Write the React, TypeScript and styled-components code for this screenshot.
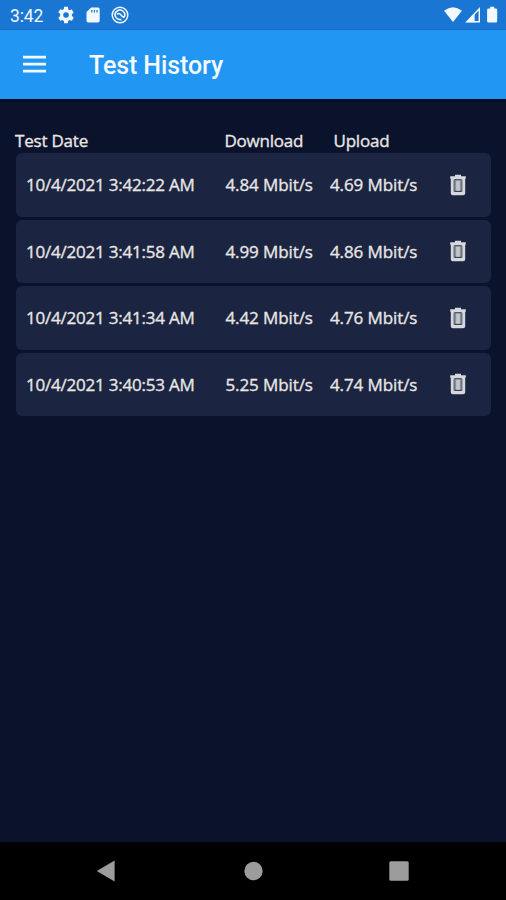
import React from "react";
import styled, { createGlobalStyle } from "styled-components";

const GlobalStyle = createGlobalStyle`
  * { box-sizing: border-box; }
  body { margin: 0; background: #0a122c; }
`;

const Screen = styled.div`
  display: flex;
  flex-direction: column;
  width: 506px;
  height: 900px;
  overflow: hidden;
  background: #0a122c;
  color: #e8e6e3;
  font-family: "Open Sans", "Noto Sans", sans-serif;
`;

const StatusBar = styled.div`
  display: flex;
  align-items: center;
  justify-content: space-between;
  flex: none;
  height: 30px;
  padding: 0 5px 0 10px;
  background: #1976d2;
  color: #f1f8ff;
  font: 400 17.5px/28px Roboto, sans-serif;
`;

const StatusGroup = styled.div<{ $gap: number }>`
  display: flex;
  align-items: center;
  gap: ${(p) => p.$gap}px;
`;

const Clock = styled.span`
  width: 39px;
  margin-right: -2px;
  padding-top: 1px;
  letter-spacing: -0.1px;
  white-space: nowrap;
`;

const Glyph = styled.svg`
  display: block;
  flex: none;
`;

const AppBar = styled.header`
  display: flex;
  align-items: center;
  flex: none;
  height: 68.5px;
  padding: 0 23px;
  gap: 42px;
  background: #2196f3;
  color: #f4faff;
  box-shadow: 0 1px 2px #050a1c;
`;

const Title = styled.h1`
  margin: 4px 0 0;
  font: 500 25px/32px Roboto, sans-serif;
  letter-spacing: -0.1px;
  white-space: nowrap;
`;

const Content = styled.main`
  flex: 1;
  padding: 30.5px 15px 0 16px;
`;

const columns = "199.5px 104.5px 110px 1fr";

const TableHead = styled.div`
  display: grid;
  grid-template-columns: 209.5px 109px 1fr;
  height: 24px;
  margin-left: -1px;
  font-size: 17px;
  line-height: 24px;
  -webkit-text-stroke: 0.35px currentColor;
`;

const HeadCell = styled.span<{ $spacing: number }>`
  letter-spacing: ${(p) => p.$spacing}px;
  white-space: nowrap;
`;

const Rows = styled.div`
  display: flex;
  flex-direction: column;
  gap: 3px;
`;

const Row = styled.div`
  display: grid;
  grid-template-columns: ${columns};
  align-items: center;
  height: 63.5px;
  padding-left: 10px;
  border-radius: 6px;
  background: #1b2441;
  font-size: 17px;
  line-height: 24px;
  -webkit-text-stroke: 0.35px currentColor;
`;

const Cell = styled.span<{ $spacing: number }>`
  padding-top: 1px;
  letter-spacing: ${(p) => p.$spacing}px;
  white-space: nowrap;
`;

const DeleteButton = styled.button`
  width: 18px;
  height: 24px;
  margin-left: 9px;
  padding: 0;
  border: 0;
  background: none;
`;

const NavBar = styled.nav`
  display: flex;
  align-items: center;
  justify-content: space-between;
  flex: none;
  height: 58px;
  padding: 0 97px 0 96px;
  background: #000;
`;

const tests = [
  { date: "10/4/2021 3:42:22 AM", down: "4.84 Mbit/s", up: "4.69 Mbit/s" },
  { date: "10/4/2021 3:41:58 AM", down: "4.99 Mbit/s", up: "4.86 Mbit/s" },
  { date: "10/4/2021 3:41:34 AM", down: "4.42 Mbit/s", up: "4.76 Mbit/s" },
  { date: "10/4/2021 3:40:53 AM", down: "5.25 Mbit/s", up: "4.74 Mbit/s" },
];

const TrashIcon = () => (
  <Glyph width="18" height="24" viewBox="0 0 18 24" fill="none">
    <path d="M6 3.2V1.8h6v1.4h4.8v2.6h-.6v14.4q0 2-2 2H3.8q-2 0-2-2V5.8h-.6V3.2z" fill="#d6d8dc" />
    <path d="M4.6 6.4h8.8v12.4H4.6z" fill="#8b909b" />
    <path d="M5.4 6.8h7.2M5.4 18.4h7.2" stroke="#3a4152" strokeWidth="1.1" />
    <path d="M5.2 7.4v10.8M12.8 7.4v10.8" stroke="#5a6170" strokeWidth=".9" />
    <path d="M9 7.6v10.2" stroke="#c3c6cd" strokeWidth="3.6" />
  </Glyph>
);

export default function App() {
  return (
    <Screen>
      <GlobalStyle />
      <StatusBar>
        <StatusGroup $gap={10}>
          <Clock>3:42</Clock>
          <Glyph width="18" height="18" viewBox="1 1 22 22" fill="currentColor">
            <path d="M19.14 12.94c.04-.3.06-.61.06-.94s-.02-.64-.07-.94l2.03-1.58a.49.49 0 0 0 .12-.61l-1.92-3.32a.49.49 0 0 0-.59-.22l-2.39.96c-.5-.38-1.03-.7-1.62-.94l-.36-2.54A.48.48 0 0 0 13.92 2h-3.84a.48.48 0 0 0-.48.41l-.36 2.54c-.59.24-1.13.57-1.62.94l-2.39-.96a.48.48 0 0 0-.59.22L2.72 8.47a.48.48 0 0 0 .12.61l2.03 1.58a6 6 0 0 0 0 2.68l-2.03 1.58a.49.49 0 0 0-.12.61l1.92 3.32c.12.22.37.29.59.22l2.39-.96c.5.38 1.03.7 1.62.94l.36 2.54c.05.24.24.41.48.41h3.84c.24 0 .44-.17.47-.41l.36-2.54c.59-.24 1.13-.56 1.62-.94l2.39.96c.22.08.47 0 .59-.22l1.92-3.32a.48.48 0 0 0-.12-.61zM12 15.4A3.4 3.4 0 1 1 12 8.6a3.4 3.4 0 0 1 0 6.8z" />
          </Glyph>
          <Glyph width="16" height="18" viewBox="0 0 16 18" fill="currentColor">
            <path fillRule="evenodd" d="M6.2 1.5H13q1.7 0 1.7 1.7v11.6q0 1.7-1.7 1.7H3.2q-1.7 0-1.7-1.7V6zm0 2.5v2.6h1.2V4zm2.6 0v2.6H10V4zm2.6 0v2.6h1.2V4z" />
          </Glyph>
          <Glyph width="18" height="18" viewBox="0 0 18 18" fill="none" stroke="currentColor">
            <circle cx="9" cy="9" r="7.8" strokeWidth="1.5" />
            <path d="M4.8 11.3A4.8 4.8 0 1 1 13 11.4M6 8.5q2-2 3.8.2T13 11.4M5 11.5q2.3 2.8 5.4 2" strokeWidth="1.6" />
          </Glyph>
        </StatusGroup>
        <StatusGroup $gap={2.5}>
          <Glyph width="18" height="18" viewBox="0 0 18 18" fill="currentColor">
            <path d="M0 4.7Q9-2.3 18 4.7L9 16z" />
          </Glyph>
          <Glyph width="16" height="18" viewBox="0 0 16 18" fill="none">
            <path d="M14.3 2.8v13H1.8z" stroke="currentColor" strokeWidth="1.4" />
            <path d="M1.2 16.2 9.6 7.8v8.4z" fill="currentColor" />
          </Glyph>
          <Glyph width="18" height="18" viewBox="0 0 18 18" fill="currentColor">
            <path d="M7.2.8h4v1.7h1.6q1.4 0 1.4 1.4v11.3q0 1.4-1.4 1.4H5.5q-1.4 0-1.4-1.4V3.9q0-1.4 1.4-1.4h1.7z" />
          </Glyph>
        </StatusGroup>
      </StatusBar>
      <AppBar>
        <Glyph width="24" height="20" viewBox="0 0 24 20" fill="currentColor">
          <path d="M0 1.8h23v2.6H0zM0 8.8h23v2.6H0zM0 15.8h23v2.6H0z" />
        </Glyph>
        <Title>Test History</Title>
      </AppBar>
      <Content>
        <TableHead>
          <HeadCell $spacing={-0.2}>Test Date</HeadCell>
          <HeadCell $spacing={-0.22}>Download</HeadCell>
          <HeadCell $spacing={-0.22}>Upload</HeadCell>
        </TableHead>
        <Rows>
          {tests.map((test) => (
            <Row key={test.date}>
              <Cell $spacing={-0.22}>{test.date}</Cell>
              <Cell $spacing={-0.1}>{test.down}</Cell>
              <Cell $spacing={-0.1}>{test.up}</Cell>
              <DeleteButton aria-label="Delete test">
                <TrashIcon />
              </DeleteButton>
            </Row>
          ))}
        </Rows>
      </Content>
      <NavBar>
        <Glyph width="20" height="22" viewBox="0 0 20 22" fill="#9c9c9c">
          <path d="M.8 11 18.6.5v21z" />
        </Glyph>
        <Glyph width="20" height="20" viewBox="0 0 20 20" fill="#9c9c9c">
          <circle cx="10.5" cy="10" r="9.2" />
        </Glyph>
        <Glyph width="20" height="20" viewBox="0 0 20 20" fill="#9c9c9c">
          <rect x=".3" y=".3" width="19.4" height="19.4" rx="1.5" />
        </Glyph>
      </NavBar>
    </Screen>
  );
}
